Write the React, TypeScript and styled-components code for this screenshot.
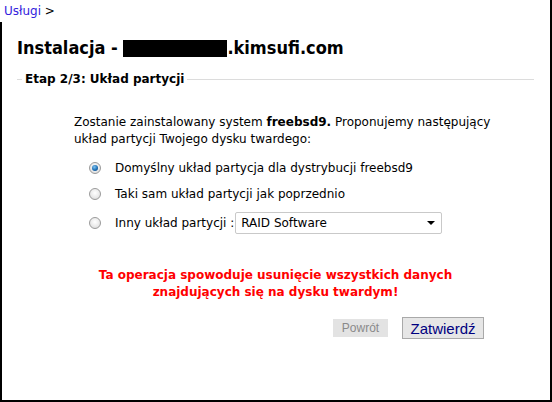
import { createGlobalStyle, styled } from "styled-components";

const GlobalStyle = createGlobalStyle`
  html, body {
    margin: 0;
    padding: 0;
    background: #ffffff;
  }
  body {
    font-family: "DejaVu Sans", Verdana, sans-serif;
    font-size: 12px;
    color: #000;
  }
`;

const Frame = styled.div`
  width: 550px;
  height: 400px;
  border-right: 2px solid #000;
  border-bottom: 2px solid #000;
  display: flex;
  flex-direction: column;
`;

const Crumbs = styled.div`
  height: 22px;
  padding: 4px 0 0 4px;
  box-sizing: border-box;
  font-size: 12px;
  line-height: 14px;
  a {
    color: #3322dd;
    text-decoration: none;
  }
`;

const Body = styled.div`
  flex: 1;
  border-left: 2px solid #000;
  padding: 14px 16px 0 15px;
`;

const Title = styled.h1`
  margin: 0;
  font-family: "DejaVu Sans Condensed", "DejaVu Sans", sans-serif;
  font-size: 18px;
  font-weight: bold;
  line-height: 24px;
  display: flex;
  align-items: center;
`;

const Redacted = styled.span`
  display: inline-block;
  width: 104px;
  height: 17px;
  background: #000;
`;

const Fieldset = styled.fieldset`
  margin: 12px 0 0 0;
  padding: 0;
  border: none;
  border-top: 1px solid #dcdcdc;
`;

const Legend = styled.legend`
  margin-left: 5px;
  padding: 0 3px;
  font-size: 12px;
  font-weight: bold;
`;

const Content = styled.div`
  padding: 28px 0 0 57px;
`;

const Intro = styled.p`
  margin: 0;
  line-height: 17px;
  font-size: 12px;
`;

const Options = styled.div`
  display: flex;
  flex-direction: column;
  margin: 8px 0 0 15px;
`;

const Option = styled.label<{ $h: number }>`
  display: flex;
  align-items: center;
  gap: 14px;
  height: ${(p) => p.$h}px;
  font-size: 12px;
`;

const Radio = styled.span<{ $on?: boolean }>`
  width: 10px;
  height: 10px;
  border-radius: 50%;
  border: 1px solid #9a9a9a;
  background: radial-gradient(circle at 50% 40%, #ffffff 0%, #e8e8e8 60%, #d0d0d0 100%);
  display: flex;
  align-items: center;
  justify-content: center;
  flex-shrink: 0;
  &::after {
    content: "";
    display: ${(p) => (p.$on ? "block" : "none")};
    width: 6px;
    height: 6px;
    border-radius: 50%;
    background: radial-gradient(circle at 40% 35%, #7fc4f2 0%, #1e6fb4 55%, #0b3f78 100%);
  }
`;

const Select = styled.div`
  width: 207px;
  height: 22px;
  border: 1px solid #c9c9c9;
  border-radius: 2px;
  margin-left: -13px;
  box-sizing: border-box;
  display: flex;
  align-items: center;
  justify-content: space-between;
  padding: 0 6px 0 5px;
  font-size: 12px;
`;

const Arrow = styled.span`
  width: 0;
  height: 0;
  border-left: 4px solid transparent;
  border-right: 4px solid transparent;
  border-top: 4px solid #000;
`;

const Warning = styled.p`
  margin: 29px 0 0 -57px;
  color: #ff0000;
  font-weight: bold;
  text-align: center;
  line-height: 17px;
  font-size: 12px;
`;

const Actions = styled.div`
  display: flex;
  align-items: center;
  gap: 14px;
  margin: 16px 0 0 316px;
`;

const Button = styled.button<{ $primary?: boolean }>`
  font-family: "Liberation Sans", Arial, sans-serif;
  cursor: pointer;
  padding: 0;
  ${(p) =>
    p.$primary
      ? `
    width: 82px;
    height: 22px;
    border: 1px solid #a9a9a9;
    background: #e6e6e6;
    color: #000080;
    font-size: 15px;
  `
      : `
    width: 55px;
    height: 18px;
    border: none;
    background: #e3e3e3;
    color: #8a8a8a;
    font-size: 12px;
    cursor: default;
  `}
`;

export default function App() {
  return (
    <>
      <GlobalStyle />
      <Frame>
        <Crumbs>
          <a href="#">Usługi</a> &gt;
        </Crumbs>
        <Body>
          <Title>
            Instalacja -&nbsp;<Redacted />.kimsufi.com
          </Title>
          <Fieldset>
            <Legend>Etap 2/3: Układ partycji</Legend>
            <Content>
              <Intro>
                Zostanie zainstalowany system <b>freebsd9.</b> Proponujemy następujący
                <br />
                układ partycji Twojego dysku twardego:
              </Intro>
              <Options>
                <Option $h={24}>
                  <Radio $on />
                  Domyślny układ partycja dla dystrybucji freebsd9
                </Option>
                <Option $h={28}>
                  <Radio />
                  Taki sam układ partycji jak poprzednio
                </Option>
                <Option $h={30}>
                  <Radio />
                  Inny układ partycji :
                  <Select>
                    RAID Software
                    <Arrow />
                  </Select>
                </Option>
              </Options>
              <Warning>
                Ta operacja spowoduje usunięcie wszystkich danych
                <br />
                znajdujących się na dysku twardym!
              </Warning>
            </Content>
            <Actions>
              <Button disabled>Powrót</Button>
              <Button $primary>Zatwierdź</Button>
            </Actions>
          </Fieldset>
        </Body>
      </Frame>
    </>
  );
}
